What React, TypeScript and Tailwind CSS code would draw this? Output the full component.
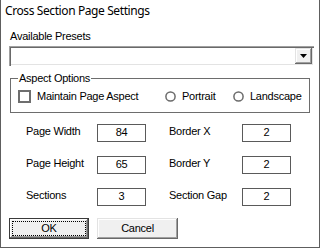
import React from 'react';

function Radio({ label, width }: { label: string; width: string }) {
  return (
    <div className={`flex items-center ${width}`}>
      <svg width="11" height="11" viewBox="0 0 11 11" className="shrink-0">
        <circle cx="5.5" cy="5.5" r="4.6" fill="#fff" stroke="#6b6b6b" strokeWidth="1.5" />
      </svg>
      <span className="ml-[6px] leading-[13px]">{label}</span>
    </div>
  );
}

function Field({ label, value, labelW }: { label: string; value: string; labelW: string }) {
  return (
    <div className="flex items-start">
      <span className={`${labelW} shrink-0 whitespace-nowrap leading-[13px] mt-[1px]`}>{label}</span>
      <div className="w-[49px] h-[18px] shrink-0 border border-[#5a5a5a] bg-white text-center leading-[14px]">
        {value}
      </div>
    </div>
  );
}

export default function App() {
  return (
    <div className="w-[322px] h-[249px] bg-white text-black text-[11px] tracking-[-0.25px] font-['Liberation_Sans',Arial,sans-serif]">
      <div className="w-[320px] h-[248px] border-x border-b border-[#5e5e5e] flex flex-col">
        {/* Title */}
        <div className="pt-[3px] pl-[4px] h-[20px] leading-[16px] text-[12px] tracking-[-0.4px] font-['Noto_Sans',sans-serif]">
          Cross Section Page Settings
        </div>

        {/* Presets */}
        <div className="mt-[10px] pl-[9px] leading-[13px]">Available Presets</div>
        <div className="mt-[3px] ml-[8px] w-[305px] h-[20px] bg-white flex justify-end items-start p-[2px] shadow-[inset_1px_1px_#a0a0a0,inset_2px_2px_#696969,inset_-1px_-1px_#ffffff,inset_-2px_-2px_#e3e3e3]">
          <div className="w-[17px] h-[16px] bg-[#f0f0f0] flex items-center justify-center shadow-[inset_-1px_-1px_#696969,inset_1px_1px_#e3e3e3,inset_-2px_-2px_#a0a0a0,inset_2px_2px_#ffffff]">
            <svg width="7" height="4" viewBox="0 0 7 4">
              <polygon points="0,0 7,0 3.5,4" fill="#000" />
            </svg>
          </div>
        </div>

        {/* Aspect options */}
        <div className="relative mt-[12px] ml-[9px] w-[300px] h-[35px] border border-[#6d6d6d]">
          <span className="absolute left-[7px] -top-[7px] px-[1px] bg-white leading-[13px]">Aspect Options</span>
          <div className="flex items-center pl-[7px] pt-[11px]">
            <div className="flex items-center w-[147px]">
              <div className="w-[13px] h-[13px] border-2 border-[#6e6e6e] bg-white shrink-0" />
              <span className="ml-[6px] leading-[13px]">Maintain Page Aspect</span>
            </div>
            <Radio label="Portrait" width="w-[68px]" />
            <Radio label="Landscape" width="" />
          </div>
        </div>

        {/* Size fields */}
        <div className="mt-[11px] pl-[25px] grid grid-cols-[143px_122px] gap-y-[14px]">
          <Field label="Page Width" value="84" labelW="w-[71px]" />
          <Field label="Border X" value="2" labelW="w-[73px]" />
          <Field label="Page Height" value="65" labelW="w-[71px]" />
          <Field label="Border Y" value="2" labelW="w-[73px]" />
          <Field label="Sections" value="3" labelW="w-[71px]" />
          <Field label="Section Gap" value="2" labelW="w-[73px]" />
        </div>

        {/* Buttons */}
        <div className="mt-[12px] ml-[8px] flex gap-[8px]">
          <div className="w-[80px] h-[21px] border border-[#3a3a3a] bg-[#f0f0f0] p-[2px] shadow-[inset_-1px_-1px_#696969,inset_1px_1px_#ffffff,inset_-2px_-2px_#a0a0a0]">
            <div className="h-full border border-dotted border-black flex items-center justify-center leading-[13px]">
              OK
            </div>
          </div>
          <div className="w-[81px] h-[21px] bg-[#f0f0f0] flex items-center justify-center leading-[13px] shadow-[inset_-1px_-1px_#696969,inset_1px_1px_#e3e3e3,inset_-2px_-2px_#a0a0a0,inset_2px_2px_#ffffff]">
            Cancel
          </div>
        </div>
      </div>
    </div>
  );
}
